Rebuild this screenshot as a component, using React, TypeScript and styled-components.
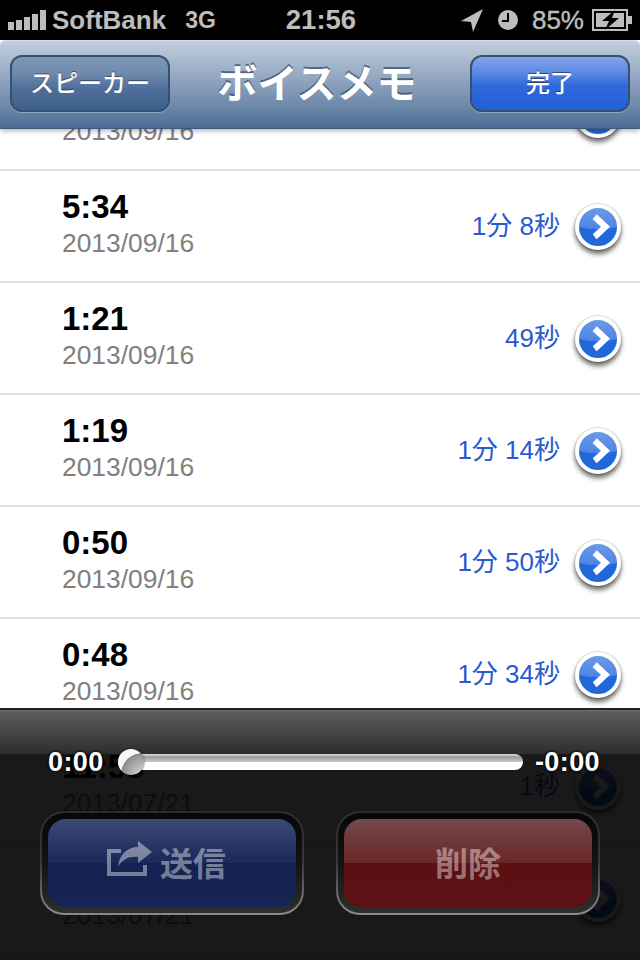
import React from 'react';
import styled, { createGlobalStyle } from 'styled-components';

const Global = createGlobalStyle`
  html, body { margin: 0; padding: 0; background: #000; }
  body { font-family: "Liberation Sans", "Noto Sans CJK JP", sans-serif; }
`;

const Screen = styled.div`
  position: relative;
  width: 640px;
  height: 960px;
  overflow: hidden;
  display: flex;
  flex-direction: column;
  background: #fff;
`;

const StatusBar = styled.div`
  height: 40px;
  flex: none;
  background: #000;
  color: #bdbdbd;
  display: grid;
  grid-template-columns: 1fr auto 1fr;
  align-items: center;
  padding: 0 6px 0 8px;
  font-weight: 700;
  font-size: 26px;
  position: relative;
  z-index: 3;
`;

const StatusLeft = styled.div`
  display: flex;
  align-items: center;
`;

const StatusRight = styled.div`
  display: flex;
  align-items: center;
  justify-content: flex-end;
`;

const StatusTime = styled.span`
  font-size: 27.5px;
`;

const Bars = styled.div`
  display: flex;
  align-items: flex-end;
  gap: 2px;
  height: 20px;
  margin-right: 6px;
`;

const Bar = styled.span<{ $h: number }>`
  width: 6px;
  height: ${(p) => p.$h}px;
  background: #bdbdbd;
`;

const Network = styled.span`
  font-size: 23px;
  margin-left: 19px;
`;

const Percent = styled.span`
  margin: 0 8px 0 14px;
  font-weight: 400;
  -webkit-text-stroke: 0.4px #bdbdbd;
`;

const Clock = styled.svg`
  margin-left: 14px;
`;

const NavBar = styled.div`
  height: 88px;
  flex: none;
  box-sizing: border-box;
  padding: 14px 10px 16px;
  display: flex;
  align-items: stretch;
  justify-content: space-between;
  background: linear-gradient(#c0cddd 0%, #a6b7cd 25%, #6d88a9 75%, #4c6b94 100%);
  border-top: 1px solid #d6deea;
  border-radius: 6px 6px 0 0;
  box-shadow: 0 1px 0 #3e5a80, 0 3px 5px rgba(0, 0, 0, 0.3);
  position: relative;
  z-index: 2;
`;

const NavTitle = styled.div`
  color: #fff;
  font-size: 40px;
  font-weight: 700;
  line-height: 58px;
  text-shadow: 0 -2px 0 rgba(40, 60, 90, 0.65);
  margin-left: -6px;
`;

const NavButton = styled.div<{ $primary?: boolean }>`
  width: 160px;
  box-sizing: border-box;
  padding-bottom: 5px;
  border-radius: 12px;
  border: 2px solid #37506f;
  display: flex;
  align-items: center;
  justify-content: center;
  color: #fff;
  font-size: 24px;
  font-weight: 500;
  text-shadow: 0 -1px 0 rgba(0, 0, 0, 0.45);
  box-shadow: 0 1px 0 rgba(255, 255, 255, 0.3);
  background: ${(p) =>
    p.$primary
      ? 'linear-gradient(#82a5ea 0%, #5b88e2 30%, #2f68da 55%, #235fd6 100%)'
      : 'linear-gradient(#7f97b8 0%, #6f8aad 30%, #4f6f9a 60%, #3e608f 100%)'};
`;

const List = styled.div`
  flex: 1;
  display: flex;
  flex-direction: column;
  margin-top: -69px;
`;

const Row = styled.div`
  height: 112px;
  flex: none;
  box-sizing: border-box;
  border-bottom: 2px solid #dfdfdf;
  display: flex;
  align-items: center;
  padding: 0 19px 0 62px;
`;

const RowText = styled.div`
  flex: 1;
  display: flex;
  flex-direction: column;
  padding-bottom: 4px;
`;

const Time = styled.div`
  color: #000;
  font-weight: 700;
  font-size: 33px;
  line-height: 38px;
  height: 38px;
`;

const DateText = styled.div`
  color: #808080;
  font-size: 26.4px;
  line-height: 34px;
`;

const Duration = styled.div`
  color: #2a5ad0;
  font-size: 26px;
  margin: 0 15px 5px 0;
`;

const Disclosure = styled.div`
  width: 38px;
  height: 38px;
  margin-top: 2px;
  border: 4px solid #fff;
  border-radius: 50%;
  display: flex;
  align-items: center;
  justify-content: center;
  background:
    radial-gradient(ellipse 46px 22px at 50% 0%, #6b9be8 0%, #4f88e2 92%, transparent 100%),
    #2067da;
  box-shadow: 0 0 1px 1px rgba(0, 0, 0, 0.12), 0 4px 5px rgba(0, 0, 0, 0.6);
`;

const Panel = styled.div`
  position: absolute;
  left: 0;
  right: 0;
  bottom: 0;
  height: 252px;
  box-sizing: border-box;
  border-top: 2px solid #222;
  background: linear-gradient(#6e6e6e 0, #5c5c5c 2px, #2d2d2d 44px, rgba(0, 0, 0, 0.9) 44px);
  z-index: 4;
`;

const SliderRow = styled.div`
  display: flex;
  align-items: center;
  padding: 37px 40px 0 48px;
  height: 30px;
`;

const SliderLabel = styled.div`
  color: #fff;
  font-weight: 700;
  font-size: 27px;
  line-height: 30px;
  letter-spacing: 0.4px;
  text-shadow: 0 0 3px #000, 0 0 2px #000;
`;

const Track = styled.div`
  position: relative;
  flex: 1;
  height: 16px;
  margin: 0 12px 0 14px;
  border-radius: 8px;
  background: linear-gradient(#dedede 0, #9c9c9c 3px, #c9c9c9 8px, #fff 8px);
`;

const Thumb = styled.div`
  position: absolute;
  left: 0;
  top: -5px;
  width: 26px;
  height: 26px;
  border-radius: 50%;
  background:
    radial-gradient(circle 21px at 92% 96%, #d4d4d4 0, #a4a4a4 68%, #8a8a8a 97%, transparent 100%),
    linear-gradient(135deg, #fff 0, #e8e8e8 100%);
  box-shadow: 0 0 2px rgba(0, 0, 0, 0.8);
`;

const ActionRow = styled.div`
  display: grid;
  grid-template-columns: 264px 264px;
  justify-content: space-between;
  padding: 34px 40px 0;
`;

const ActionFrame = styled.div`
  height: 104px;
  box-sizing: border-box;
  padding: 6px;
  border-radius: 24px;
  border: 2px solid transparent;
  background:
    linear-gradient(rgba(5, 5, 5, 0.95), rgba(25, 25, 25, 0.8)) padding-box,
    linear-gradient(#2c2c2c, #383838 50%, #8a8a8a) border-box;
`;

const ActionButton = styled.div<{ $danger?: boolean }>`
  height: 100%;
  box-sizing: border-box;
  padding: 0 ${(p) => (p.$danger ? 0 : 14)}px 3px 0;
  border-radius: 18px;
  display: flex;
  align-items: center;
  justify-content: center;
  gap: 6px;
  color: rgba(255, 255, 255, 0.42);
  font-size: 33px;
  font-weight: 700;
  background: ${(p) =>
    p.$danger
      ? 'linear-gradient(rgba(122,76,78,.95) 0, rgba(112,40,42,.95) 50%, rgba(98,16,18,.9) 50%, rgba(98,16,18,.9) 100%)'
      : 'linear-gradient(rgba(62,78,122,.95) 0, rgba(26,42,98,.9) 50%, rgba(18,36,92,.85) 50%, rgba(18,36,92,.85) 100%)'};
`;

const ShareIcon = styled.svg`
  width: 50px;
  height: 42px;
  margin-top: -6px;
`;

const rows = [
  { time: '', date: '2013/09/16', dur: '' },
  { time: '5:34', date: '2013/09/16', dur: '1分 8秒' },
  { time: '1:21', date: '2013/09/16', dur: '49秒' },
  { time: '1:19', date: '2013/09/16', dur: '1分 14秒' },
  { time: '0:50', date: '2013/09/16', dur: '1分 50秒' },
  { time: '0:48', date: '2013/09/16', dur: '1分 34秒' },
  { time: '11:53', date: '2013/07/21', dur: '1秒' },
  { time: '11:52', date: '2013/07/21', dur: '4秒' },
];

const Chevron = () => (
  <svg width="26" height="26" viewBox="0 0 26 26">
    <path d="M7.7 5.3 L11.7 0.3 L25 12.7 L11.7 25.3 L7.7 20.3 L16 12.7 Z" fill="#fff" />
  </svg>
);

export default function App() {
  return (
    <Screen>
      <Global />
      <StatusBar>
        <StatusLeft>
          <Bars>
            {[8, 10, 13, 16, 20].map((h) => (
              <Bar key={h} $h={h} />
            ))}
          </Bars>
          <span>SoftBank</span>
          <Network>3G</Network>
        </StatusLeft>
        <StatusTime>21:56</StatusTime>
        <StatusRight>
          <svg width="24" height="24" viewBox="0 0 24 24">
            <path d="M23 1 L1 13 L11 14 L13 24 Z" fill="#bdbdbd" />
          </svg>
          <Clock width="20" height="20" viewBox="0 0 20 20">
            <circle cx="10" cy="10" r="10" fill="#bdbdbd" />
            <path d="M10 3 V11 H4" fill="none" stroke="#000" strokeWidth="2" />
          </Clock>
          <Percent>85%</Percent>
          <svg width="42" height="22" viewBox="0 0 42 22">
            <rect x="1" y="1" width="34" height="20" fill="none" stroke="#bdbdbd" strokeWidth="2" />
            <rect x="4" y="4" width="28" height="14" fill="#bdbdbd" />
            <rect x="36" y="7" width="4" height="8" fill="#bdbdbd" />
            <path d="M23 1 L10 12 H17 L13 21 L27 9 H20 Z" fill="#000" />
          </svg>
        </StatusRight>
      </StatusBar>
      <NavBar>
        <NavButton>スピーカー</NavButton>
        <NavTitle>ボイスメモ</NavTitle>
        <NavButton $primary>完了</NavButton>
      </NavBar>
      <List>
        {rows.map((r, i) => (
          <Row key={i}>
            <RowText>
              <Time>{r.time}</Time>
              <DateText>{r.date}</DateText>
            </RowText>
            <Duration>{r.dur}</Duration>
            <Disclosure>
              <Chevron />
            </Disclosure>
          </Row>
        ))}
      </List>
      <Panel>
        <SliderRow>
          <SliderLabel>0:00</SliderLabel>
          <Track>
            <Thumb />
          </Track>
          <SliderLabel>-0:00</SliderLabel>
        </SliderRow>
        <ActionRow>
          <ActionFrame>
            <ActionButton>
              <ShareIcon viewBox="0 0 50 42">
                <path d="M17 13 H5 V36 H41 V27" fill="none" stroke="currentColor" strokeWidth="4" />
                <path d="M34 3 L48 14 L34 25 V19 C26 18 18 21 14 29 C15 17 23 9 34 9 Z" fill="currentColor" />
              </ShareIcon>
              送信
            </ActionButton>
          </ActionFrame>
          <ActionFrame>
            <ActionButton $danger>削除</ActionButton>
          </ActionFrame>
        </ActionRow>
      </Panel>
    </Screen>
  );
}
